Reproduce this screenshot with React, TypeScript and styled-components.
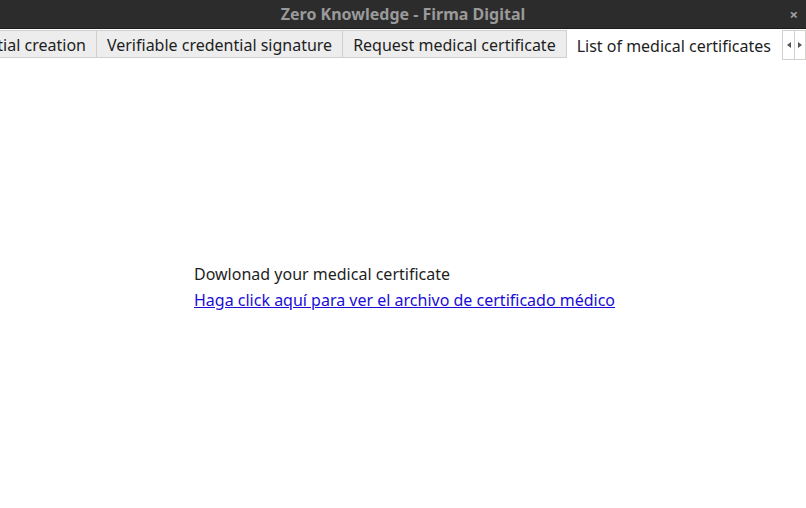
import React from 'react'
import styled, { createGlobalStyle } from 'styled-components'

const GlobalStyle = createGlobalStyle`
  html, body {
    margin: 0;
    padding: 0;
    background: #ffffff;
  }
  body {
    font-family: 'Noto Sans', 'DejaVu Sans', sans-serif;
  }
`

const tabs = [
  'Verifiable credential creation',
  'Verifiable credential signature',
  'Request medical certificate',
  'List of medical certificates',
]

function App() {
  return (
    <>
      <GlobalStyle />
      <Window>
        <TitleBar>
          <Title>Zero Knowledge - Firma Digital</Title>
          <CloseButton>×</CloseButton>
        </TitleBar>
        <TabStrip>
          <TabList>
            {tabs.map((t, i) => (
              <Tab key={t} active={i === tabs.length - 1}>{t}</Tab>
            ))}
          </TabList>
          <Arrows>
            <ArrowButton>
              <svg width='4' height='6' viewBox='0 0 4 6'><path d='M4 0 L0 3 L4 6 Z' fill='#555' /></svg>
            </ArrowButton>
            <ArrowButton>
              <svg width='4' height='6' viewBox='0 0 4 6'><path d='M0 0 L4 3 L0 6 Z' fill='#555' /></svg>
            </ArrowButton>
          </Arrows>
        </TabStrip>
        <Content>
          <Panel>
            <Label>Dowlonad your medical certificate</Label>
            <Link href='#'>Haga click aquí para ver el archivo de certificado médico</Link>
          </Panel>
        </Content>
      </Window>
    </>
  )
}

export default App

const Window = styled.div`
  width: 806px;
  height: 508px;
  display: flex;
  flex-direction: column;
  overflow: hidden;
  background: #ffffff;
`

const TitleBar = styled.div`
  height: 28px;
  flex-shrink: 0;
  background: #2c2c2c;
  border-bottom: 1px solid #1c1c1c;
  display: flex;
  align-items: center;
  justify-content: center;
  position: relative;
`

const Title = styled.span`
  color: #9a9a9a;
  font-size: 16px;
  font-weight: 700;
`

const CloseButton = styled.span`
  position: absolute;
  right: 8px;
  top: 4px;
  color: #a0a0a0;
  font-size: 15px;
  font-weight: 700;
`

const TabStrip = styled.div`
  display: flex;
  height: 31px;
  flex-shrink: 0;
  padding-top: 1px;
  background: #ffffff;
`

const TabList = styled.div`
  flex: 1;
  display: flex;
  justify-content: flex-end;
  overflow: hidden;
  min-width: 0;
`

const Tab = styled.div<{ active?: boolean }>`
  flex-shrink: 0;
  padding: 1px 10px 0;
  height: ${p => (p.active ? '31px' : '28px')};
  display: flex;
  align-items: center;
  font-size: 16px;
  color: #1e1e1e;
  white-space: nowrap;
  box-sizing: border-box;
  background: ${p => (p.active ? '#ffffff' : '#ededed')};
  border: 1px solid ${p => (p.active ? 'transparent' : '#d3cfcb')};
  border-left-width: 0;
  border-top-width: ${p => (p.active ? '0' : '1px')};
`

const Arrows = styled.div`
  display: flex;
  flex-shrink: 0;
  height: 31px;
`

const ArrowButton = styled.div`
  width: 12px;
  height: 30px;
  box-sizing: border-box;
  display: flex;
  align-items: center;
  justify-content: center;
  background: #ffffff;
  border: 1px solid #d3cfcb;
  border-right-width: 0;
  &:last-child {
    border-right-width: 1px;
  }
`

const Content = styled.div`
  flex: 1;
  display: flex;
  padding-top: 202px;
  padding-left: 194px;
`

const Panel = styled.div`
  display: flex;
  flex-direction: column;
  gap: 4px;
`

const Label = styled.span`
  font-size: 16px;
  color: #1e1e1e;
`

const Link = styled.a`
  font-size: 16px;
  color: #1a0dd6;
  text-decoration: underline;
`
